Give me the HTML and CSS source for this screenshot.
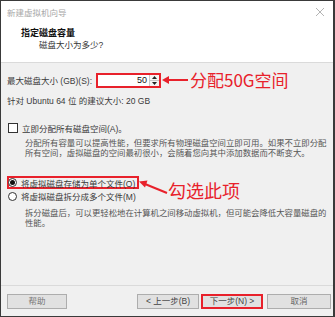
FILE: index.html
```html
<!DOCTYPE html>
<html lang="zh-CN">
<head>
<meta charset="utf-8">
<title>新建虚拟机向导</title>
<link rel="stylesheet" href="styles.css">
</head>
<body>
<div class="window">
  <div class="titlebar">
    <span class="title">新建虚拟机向导</span>
    <svg class="close" width="10" height="10" viewBox="0 0 10 10"><path d="M1 1L9 9M9 1L1 9" stroke="#b4b4b4" stroke-width="1"/></svg>
  </div>
  <div class="header">
    <div class="h-title">指定磁盘容量</div>
    <div class="h-sub">磁盘大小为多少?</div>
  </div>
  <div class="content">
    <div class="size-row">
      <span class="lbl">最大磁盘大小 (GB)(S):</span>
      <div class="spin-field">
        <span class="spin-value">50</span>
        <div class="spin-btns">
          <div class="spin-btn"><svg width="5" height="3" viewBox="0 0 5 3"><path d="M0 3L2.5 0L5 3Z" fill="#222"/></svg></div>
          <div class="spin-btn"><svg width="5" height="3" viewBox="0 0 5 3"><path d="M0 0L2.5 3L5 0Z" fill="#222"/></svg></div>
        </div>
      </div>
      <svg class="arrow1" width="26" height="10" viewBox="0 0 26 10"><path d="M6 5H26" stroke="#e8212b" stroke-width="2"/><path d="M0 5L7 1V9Z" fill="#e8212b"/></svg>
      <span class="note note1">分配50G空间</span>
    </div>
    <div class="rec">针对 Ubuntu 64 位 的建议大小: 20 GB</div>
    <div class="check-row">
      <span class="checkbox"></span>
      <span>立即分配所有磁盘空间(A)。</span>
    </div>
    <div class="desc">分配所有容量可以提高性能，但要求所有物理磁盘空间立即可用。如果不立即分配<br>所有空间，虚拟磁盘的空间最初很小，会随着您向其中添加数据而不断变大。</div>
    <div class="radio-group">
      <div class="radio-row selected">
        <span class="radio on"></span>
        <span>将虚拟磁盘存储为单个文件(O)</span>
      </div>
      <svg class="arrow2" width="34" height="20" viewBox="0 0 34 20"><path d="M9 8L31 17" stroke="#e8212b" stroke-width="2"/><path d="M3 5.5L11.5 4.5L9 11.5Z" fill="#e8212b"/></svg>
      <span class="note note2">勾选此项</span>
      <div class="radio-row second">
        <span class="radio"></span>
        <span>将虚拟磁盘拆分成多个文件(M)</span>
      </div>
    </div>
    <div class="desc desc2">拆分磁盘后，可以更轻松地在计算机之间移动虚拟机，但可能会降低大容量磁盘的<br>性能。</div>
  </div>
  <div class="footer">
    <button class="btn help">帮助</button>
    <div class="spacer"></div>
    <button class="btn prev">&lt; 上一步(B)</button>
    <button class="btn next">下一步(N) &gt;</button>
    <button class="btn cancel">取消</button>
  </div>
</div>
</body>
</html>
```

FILE: styles.css
```css
* { box-sizing: border-box; }
html, body { margin: 0; padding: 0; background: #ffffff; }
body {
  font-family: "Liberation Sans", "Noto Sans CJK SC", sans-serif;
  font-size: 8.5px;
  color: #3a3a3a;
}
.window {
  width: 335px;
  height: 317px;
  border: 1px solid #3a3a3a;
  border-right-width: 2px;
  display: flex;
  flex-direction: column;
  background: #f0f0f0;
  overflow: hidden;
}
.titlebar {
  height: 21px;
  background: #fff;
  display: flex;
  align-items: center;
  padding: 0 8px 0 6px;
}
.title { font-size: 8.5px; color: #a8a8a8; flex: 1; }
.close { display: block; }
.header {
  height: 41px;
  background: #fff;
  border-bottom: 1px solid #dadada;
  padding-top: 5px;
}
.h-title { font-weight: bold; font-size: 9px; line-height: 12px; padding-left: 20px; color: #111; }
.h-sub { line-height: 12px; padding-left: 38px; color: #333; }
.content {
  flex: 1;
  padding: 0 0 0 6px;
  white-space: nowrap;
}
.size-row {
  margin-top: 7px;
  height: 20px;
  display: flex;
  align-items: center;
}
.lbl { width: 89px; flex-shrink: 0; white-space: nowrap; }
.spin-field {
  width: 65px;
  height: 15px;
  flex-shrink: 0;
  border: 2px solid #e8212b;
  background: #fff;
  display: flex;
  align-items: center;
}
.spin-value { flex: 1; text-align: right; padding-right: 2px; color: #111; font-size: 9px; }
.spin-btns {
  width: 10px;
  height: 100%;
  display: flex;
  flex-direction: column;
  border-left: 1px solid #c8c8c8;
}
.spin-btn {
  flex: 1;
  display: flex;
  align-items: center;
  justify-content: center;
  background: #f4f4f4;
}
.spin-btn + .spin-btn { border-top: 1px solid #c8c8c8; }
.spin-btn svg { display: block; }
.arrow1 { display: block; margin-left: 1px; flex-shrink: 0; }
.note {
  font-family: "Noto Sans CJK SC", sans-serif;
  color: #e8212b;
  white-space: nowrap;
}
.note1 { font-size: 17px; line-height: 20px; margin-left: 2px; }
.rec { margin-top: 5px; line-height: 12px; }
.check-row {
  margin-top: 15px;
  height: 12px;
  display: flex;
  align-items: center;
}
.checkbox {
  width: 10px;
  height: 10px;
  border: 1px solid #333;
  background: #fff;
  margin: 0 4px 0 1px;
}
.desc {
  margin-top: 4px;
  padding-left: 18px;
  line-height: 10px;
  font-size: 8.4px;
  color: #555;
}
.radio-group { position: relative; margin-top: 18px; }
.radio-row {
  display: flex;
  align-items: center;
  height: 12px;
}
.radio-row.selected {
  display: inline-flex;
  height: 13px;
  border: 2px solid #e8212b;
  padding-right: 2px;
}
.radio-row.second { margin-top: 1px; }
.radio {
  width: 9px;
  height: 9px;
  border: 1px solid #333;
  border-radius: 50%;
  background: #fff;
  margin: 0 4px 0 1px;
  display: flex;
  align-items: center;
  justify-content: center;
}
.radio-row.selected .radio { margin-left: -1px; }
.radio.on::after {
  content: "";
  width: 5px;
  height: 5px;
  border-radius: 50%;
  background: #111;
}
.arrow2 { position: absolute; left: 129px; top: 0; }
.note2 { position: absolute; left: 161px; top: 4px; font-size: 18px; line-height: 20px; }
.desc2 { margin-top: 6px; }
.footer {
  height: 31px;
  border-top: 1px solid #dadada;
  display: flex;
  align-items: flex-start;
  padding: 8px 2px 0 6px;
}
.spacer { flex: 1; }
.btn {
  height: 15px;
  width: 62px;
  border: 1px solid #adadad;
  background: #e1e1e1;
  font-family: "Liberation Sans", "Noto Sans CJK SC", sans-serif;
  font-size: 8.5px;
  color: #444;
  padding: 0;
  line-height: 13px;
  white-space: nowrap;
}
.help { width: 60px; color: #777; }
.prev { margin-right: 2px; }
.next { border: 2px solid #e8212b; line-height: 11px; }
.cancel { width: 64px; margin-left: 4px; color: #666; }
```
